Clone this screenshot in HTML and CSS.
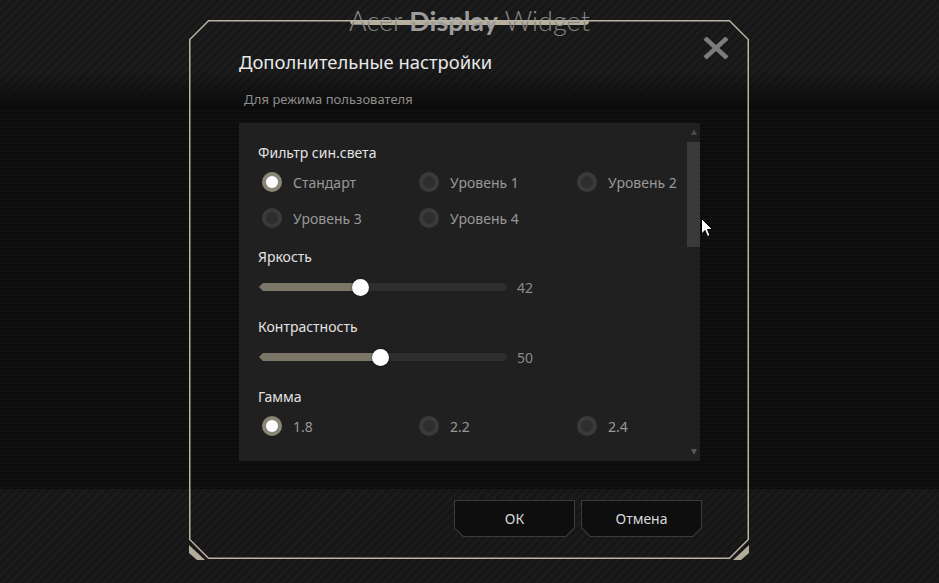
FILE: index.html
```html
<!DOCTYPE html>
<html lang="ru">
<head>
	<meta charset="UTF-8">
	<title>Acer Display Widget</title>
	<link rel="stylesheet" href="styles.css">
</head>
<body>
	<div class="app">
		<header class="app-head">
			<h1 class="app-title"><span>Acer</span> <b>Display</b> <span>Widget</span></h1>
			<div class="app-tab"></div>
		</header>
		<div class="app-body"></div>
		<div class="app-foot"></div>
	</div>

	<div class="dialog">
		<svg class="dialog-frame" width="562" height="542" viewBox="0 0 562 542">
			<polygon points="19.5,0.75 540.5,0.75 559.25,19.5 559.25,519.5 540.5,538.25 19.5,538.25 0.75,519.5 0.75,19.5" fill="none" stroke="#bab3a2" stroke-width="1.5"/>
			<polygon points="0,525 16,540 8,540 0,533" fill="#b3ac9a"/>
			<polygon points="560,525 544,540 552,540 560,533" fill="#b3ac9a"/>
		</svg>

		<button class="dialog-close" aria-label="Закрыть">
			<svg width="26" height="22" viewBox="0 0 26 22"><path d="M2 1 L24 21 M24 1 L2 21" stroke="#7c7c7c" stroke-width="4.5"/></svg>
		</button>

		<h2 class="dialog-title">Дополнительные настройки</h2>
		<p class="dialog-sub">Для режима пользователя</p>

		<div class="panel">
			<div class="panel-body">
				<div class="field-label">Фильтр син.света</div>
				<div class="radio-grid">
					<label class="radio is-on"><span class="radio-dot"></span>Стандарт</label>
					<label class="radio"><span class="radio-dot"></span>Уровень 1</label>
					<label class="radio"><span class="radio-dot"></span>Уровень 2</label>
					<label class="radio"><span class="radio-dot"></span>Уровень 3</label>
					<label class="radio"><span class="radio-dot"></span>Уровень 4</label>
				</div>

				<div class="field-label gap-s">Яркость</div>
				<div class="slider-row">
					<div class="slider">
						<div class="slider-fill" style="width: 101px"></div>
						<span class="slider-thumb" style="left: 101px"></span>
					</div>
					<span class="slider-val">42</span>
				</div>

				<div class="field-label gap">Контрастность</div>
				<div class="slider-row">
					<div class="slider">
						<div class="slider-fill" style="width: 121px"></div>
						<span class="slider-thumb" style="left: 121px"></span>
					</div>
					<span class="slider-val">50</span>
				</div>

				<div class="field-label gap">Гамма</div>
				<div class="radio-grid">
					<label class="radio is-on"><span class="radio-dot"></span>1.8</label>
					<label class="radio"><span class="radio-dot"></span>2.2</label>
					<label class="radio"><span class="radio-dot"></span>2.4</label>
				</div>
			</div>

			<div class="scrollbar">
				<span class="arrow up"></span>
				<div class="scroll-track"><div class="scroll-thumb"></div></div>
				<span class="arrow down"></span>
			</div>
		</div>

		<div class="dialog-actions">
			<button class="btn">ОК</button>
			<button class="btn">Отмена</button>
		</div>
	</div>

	<svg class="cursor" width="13" height="20" viewBox="0 0 13 20">
		<path d="M0.5 0.5 L0.5 16 L4 12.5 L6.5 18.5 L9 17.5 L6.5 11.5 L11.5 11.5 Z" fill="#fff" stroke="#000" stroke-width="1"/>
	</svg>
</body>
</html>
```

FILE: styles.css
```css
*{
	margin: 0;
	padding: 0;
	box-sizing: border-box;
}
body{
	width: 939px;
	height: 583px;
	overflow: hidden;
	position: relative;
	background: #141414;
	font-family: "Noto Sans", "Open Sans", sans-serif;
}

/* app behind the dialog */
.app-head{
	height: 108px;
	text-align: center;
	position: relative;
	background:
		linear-gradient(to bottom, rgba(11,11,11,0) 65%, #0b0b0b 100%),
		repeating-linear-gradient(135deg, #1c1c1c 0 3px, #171717 3px 6px);
}
.app-title{
	padding-top: 5px;
	font-family: Lato, "Noto Sans", sans-serif;
	font-size: 27px;
	line-height: 32px;
	font-weight: 300;
	color: #858585;
}
.app-title b{
	font-weight: 700;
	color: #9c9c9c;
}
.app-tab{
	width: 239px;
	height: 4px;
	margin: -16px auto 0;
	background: #b6af9d;
	border-radius: 0 0 5px 5px;
}
.app-body{
	height: 381px;
	background: repeating-linear-gradient(to bottom, #0c0c0c 0 2px, #101010 2px 4px);
}
.app-foot{
	height: 94px;
	background: repeating-linear-gradient(135deg, #1b1b1b 0 3px, #161616 3px 6px);
}

/* dialog */
.dialog{
	position: absolute;
	left: 189px;
	top: 20px;
	width: 560px;
	height: 539px;
	padding: 31px 49px 0 50px;
	color: #e4e4e4;
}
.dialog::before{
	content: "";
	position: absolute;
	inset: 0;
	z-index: -1;
	background: rgba(23,23,23,0.93);
	clip-path: polygon(19px 0, calc(100% - 19px) 0, 100% 19px, 100% calc(100% - 19px), calc(100% - 19px) 100%, 19px 100%, 0 calc(100% - 19px), 0 19px);
}
.dialog-frame{
	position: absolute;
	left: 0;
	top: 0;
	overflow: visible;
	pointer-events: none;
}
.dialog-close{
	position: absolute;
	left: 514px;
	top: 17px;
	width: 26px;
	height: 22px;
	border: none;
	background: none;
}
.dialog-close svg{
	display: block;
}
.dialog-title{
	font-size: 18.4px;
	line-height: 22px;
	font-weight: 400;
	color: #e8e8e8;
}
.dialog-sub{
	margin-top: 17px;
	padding-left: 5px;
	font-size: 13px;
	line-height: 18px;
	color: #8e8e8e;
}

.panel{
	display: flex;
	margin-top: 15px;
	height: 338px;
	background: #202020;
}
.panel-body{
	flex: 1;
	padding: 20px 0 0 19px;
}
.field-label{
	font-size: 14px;
	line-height: 20px;
	color: #e2e2e2;
}
.field-label.gap{
	margin-top: 20px;
}
.field-label.gap-s{
	margin-top: 11px;
}
.radio-grid{
	display: grid;
	grid-template-columns: 157px 158px auto;
	grid-auto-rows: 36px;
	margin-top: 1px;
	padding-left: 4px;
}
.radio{
	display: flex;
	align-items: center;
	gap: 11px;
	font-size: 14px;
	color: #989898;
}
.radio-dot{
	width: 20px;
	height: 20px;
	border-radius: 50%;
	background: #3a3a3a;
	display: flex;
	align-items: center;
	justify-content: center;
}
.radio-dot::after{
	content: "";
	width: 12px;
	height: 12px;
	border-radius: 50%;
	background: #2e2e2e;
}
.radio.is-on .radio-dot{
	background: #8b8776;
}
.radio.is-on .radio-dot::after{
	background: #fff;
}

.slider-row{
	display: flex;
	align-items: center;
	height: 20px;
	margin-top: 10px;
	padding-left: 1px;
}
.slider{
	position: relative;
	width: 249px;
	height: 8px;
}
.slider::before{
	content: "";
	position: absolute;
	inset: 0;
	background: #2e2e2e;
	clip-path: polygon(4px 0, calc(100% - 4px) 0, 100% 50%, calc(100% - 4px) 100%, 4px 100%, 0 50%);
}
.slider-fill{
	position: absolute;
	left: 0;
	top: 0;
	height: 100%;
	background: #7b7768;
	clip-path: polygon(4px 0, 100% 0, 100% 100%, 4px 100%, 0 50%);
}
.slider-thumb{
	position: absolute;
	top: 50%;
	width: 17px;
	height: 17px;
	margin: -8.5px 0 0 -8.5px;
	border-radius: 50%;
	background: #fff;
	box-shadow: 0 0 2px rgba(0,0,0,0.6);
}
.slider-val{
	margin-left: 9px;
	font-size: 14px;
	color: #8a8a8a;
}

.scrollbar{
	width: 13px;
	display: flex;
	flex-direction: column;
	align-items: center;
	padding: 6px 0 6px;
}
.arrow{
	width: 0;
	height: 0;
	border-left: 3.5px solid transparent;
	border-right: 3.5px solid transparent;
}
.arrow.up{
	border-bottom: 6px solid #484848;
}
.arrow.down{
	border-top: 6px solid #585858;
}
.scroll-track{
	flex: 1;
	width: 100%;
	padding-top: 7px;
}
.scroll-thumb{
	height: 105px;
	background: #3a3a3a;
}

.dialog-actions{
	display: flex;
	justify-content: flex-end;
	gap: 6px;
	margin: 39px -2px 0 0;
}
.btn{
	position: relative;
	isolation: isolate;
	width: 121px;
	height: 37px;
	border: none;
	background: #3b3b3b;
	font-family: "Noto Sans", "Open Sans", sans-serif;
	font-size: 14px;
	color: #d8d8d8;
	clip-path: polygon(0 0, 100% 0, 100% calc(100% - 9px), calc(100% - 9px) 100%, 9px 100%, 0 calc(100% - 9px));
}
.btn::before{
	content: "";
	position: absolute;
	inset: 1px;
	z-index: -1;
	background: #0e0e0e;
	clip-path: polygon(0 0, 100% 0, 100% calc(100% - 8.5px), calc(100% - 8.5px) 100%, 8.5px 100%, 0 calc(100% - 8.5px));
}

.cursor{
	position: absolute;
	left: 701px;
	top: 218px;
}
```
